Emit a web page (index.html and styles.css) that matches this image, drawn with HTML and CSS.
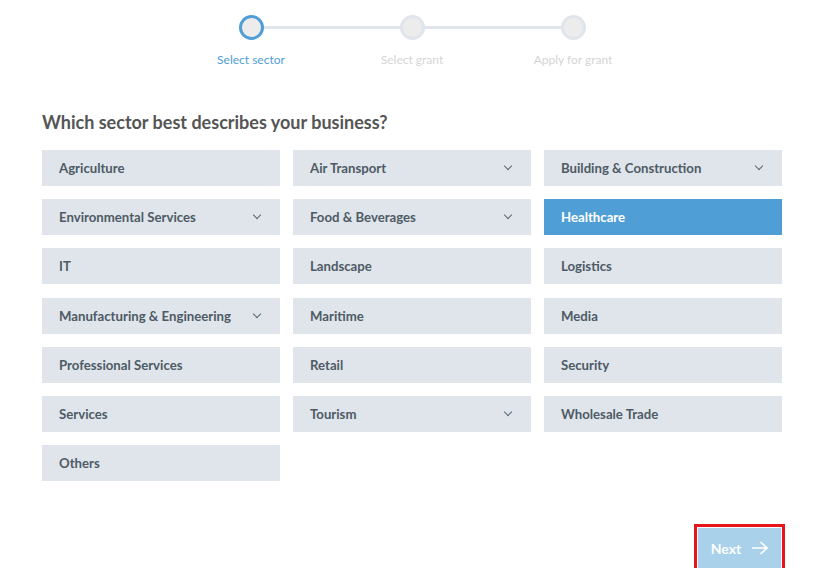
FILE: index.html
```html
<!DOCTYPE html>
<html lang="en">
<head>
    <meta charset="UTF-8">
    <title>Select sector</title>
    <link rel="stylesheet" href="styles.css">
</head>
<body>

    <!-- Progress steps -->
    <div class="steps">
        <div class="step active">
            <span class="dot"></span>
            <span class="label">Select sector</span>
        </div>
        <div class="step">
            <span class="dot"></span>
            <span class="label">Select grant</span>
        </div>
        <div class="step">
            <span class="dot"></span>
            <span class="label">Apply for grant</span>
        </div>
    </div>

    <main class="content">
        <h2 class="question">Which sector best describes your business?</h2>

        <div class="sectors">
            <div class="sector">Agriculture</div>
            <div class="sector has-sub">Air Transport <span class="chev"></span></div>
            <div class="sector has-sub">Building &amp; Construction <span class="chev"></span></div>
            <div class="sector has-sub">Environmental Services <span class="chev"></span></div>
            <div class="sector has-sub">Food &amp; Beverages <span class="chev"></span></div>
            <div class="sector selected">Healthcare</div>
            <div class="sector">IT</div>
            <div class="sector">Landscape</div>
            <div class="sector">Logistics</div>
            <div class="sector has-sub">Manufacturing &amp; Engineering <span class="chev"></span></div>
            <div class="sector">Maritime</div>
            <div class="sector">Media</div>
            <div class="sector">Professional Services</div>
            <div class="sector">Retail</div>
            <div class="sector">Security</div>
            <div class="sector">Services</div>
            <div class="sector has-sub">Tourism <span class="chev"></span></div>
            <div class="sector">Wholesale Trade</div>
            <div class="sector">Others</div>
        </div>

        <div class="actions">
            <button class="next-btn">Next
                <svg width="17" height="14" viewBox="0 0 17 14" fill="none" stroke="#fff" stroke-width="1.6">
                    <path d="M1 7h15M9.5 1l6.5 6-6.5 6"/>
                </svg>
            </button>
        </div>
    </main>

</body>
</html>
```

FILE: styles.css
```css
/* General */
body {
    margin: 0;
    font-family: 'Lato', 'Noto Sans', sans-serif;
    background: #fff;
    color: #555;
}

/* Steps */
.steps {
    display: flex;
    justify-content: center;
    padding-top: 15px;
    margin-left: 4px;
}

.step {
    position: relative;
    width: 161px;
    display: flex;
    flex-direction: column;
    align-items: center;
}

/* connecting line */
.step + .step::before {
    content: "";
    position: absolute;
    top: 11px;
    right: 50%;
    width: 161px;
    height: 3px;
    background: #dfe5ea;
}

.dot {
    position: relative;
    z-index: 1;
    width: 19px;
    height: 19px;
    border-radius: 50%;
    border: 3px solid #dfe5ea;
    background: #ececec;
}

.step.active .dot {
    border-color: #4f9ed6;
}

.label {
    margin-top: 12px;
    font-size: 12px;
    color: #d5d5d5;
}

.step.active .label {
    color: #4f9ed6;
}

/* Content */
.content {
    padding: 0 38px 0 42px;
}

.question {
    margin: 44px 0 17px;
    font-size: 18px;
    font-weight: 700;
    color: #555;
}

.sectors {
    display: grid;
    grid-template-columns: repeat(3, 238px);
    column-gap: 13px;
    row-gap: 13.2px;
}

.sector {
    height: 36px;
    display: flex;
    align-items: center;
    justify-content: space-between;
    padding: 0 20px 0 17px;
    background: #dfe5ea;
    color: #4e5a66;
    font-size: 13.2px;
    font-weight: 700;
    box-sizing: border-box;
}

.sector.selected {
    background: #4f9ed6;
    color: #fff;
}

.chev {
    width: 5px;
    height: 5px;
    border-right: 1.5px solid #5a6a7a;
    border-bottom: 1.5px solid #5a6a7a;
    transform: rotate(45deg);
    margin-top: -4px;
}

/* Next button */
.actions {
    display: flex;
    justify-content: flex-end;
    margin-top: 47px;
}

.next-btn {
    width: 83px;
    height: 40px;
    margin-right: 1px;
    display: flex;
    align-items: center;
    justify-content: center;
    gap: 10px;
    background: #a9d1ea;
    color: #fff;
    border: none;
    border-radius: 0;
    box-shadow: 0 1px 1px rgba(0, 0, 0, 0.12);
    font-family: 'Lato', sans-serif;
    font-size: 14px;
    font-weight: 700;
    outline: 3px solid #e8141c;
    outline-offset: 1px;
}
```
